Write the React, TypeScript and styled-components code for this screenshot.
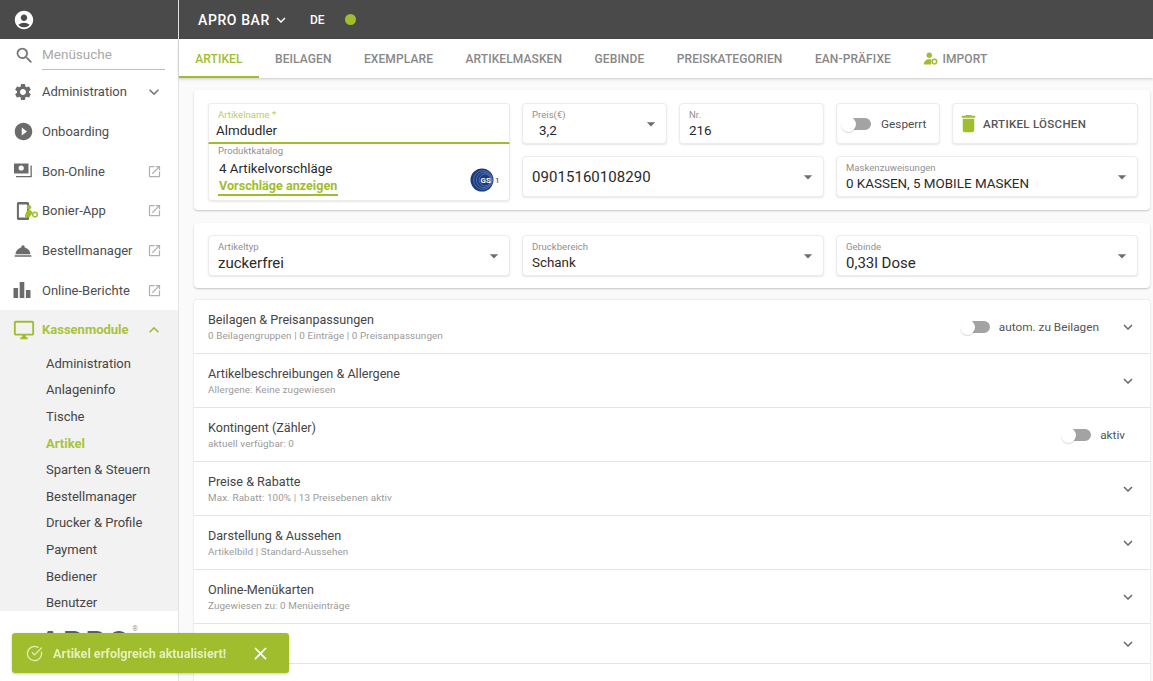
import styled, { createGlobalStyle } from "styled-components";
import {
  MdAccountCircle,
  MdArrowDropDown,
  MdClose,
  MdDelete,
  MdExpandLess,
  MdExpandMore,
  MdOpenInNew,
  MdOutlineDesktopWindows,
  MdPlayCircleFilled,
  MdRoomService,
  MdSearch,
  MdSettings,
} from "react-icons/md";
import { CircleCheckBig } from "lucide-react";
import type { ReactNode } from "react";

const GREEN = "#a0bd2e";
const DARK = "#4a4a4a";

const GlobalStyle = createGlobalStyle`
  html, body {
    margin: 0;
    height: 100%;
    overflow: hidden;
    background: #fafafa;
    font-family: Roboto, "Liberation Sans", sans-serif;
    color: #3c3c3c;
  }
  * { box-sizing: border-box; }
`;

const Shell = styled.div`
  display: grid;
  grid-template-columns: 179px 1fr;
  height: 681px;
  overflow: hidden;
`;

const Sidebar = styled.aside`
  display: flex;
  flex-direction: column;
  background: #fff;
  border-right: 1px solid #e3e3e3;
  overflow: hidden;
`;

const SideTop = styled.div`
  height: 39px;
  flex-shrink: 0;
  display: flex;
  align-items: center;
  padding-left: 13px;
  background: ${DARK};
  color: #fff;
`;

const SearchRow = styled.div`
  height: 33px;
  flex-shrink: 0;
  display: flex;
  align-items: center;
  gap: 7px;
  padding: 0 13px 0 14px;
  color: #757575;
`;

const SearchText = styled.div`
  flex: 1;
  height: 29px;
  line-height: 26px;
  font-size: 13.5px;
  color: #a9a9a9;
  border-bottom: 1px solid #bdbdbd;
`;

const NavItem = styled.div<{ $active?: boolean }>`
  height: 39.7px;
  flex-shrink: 0;
  display: flex;
  align-items: center;
  padding: 0 16px 0 13px;
  font-size: 13px;
  font-weight: ${({ $active }) => ($active ? 700 : 400)};
  color: ${({ $active }) => ($active ? "#a9c23f" : "#4d4d4d")};
  background: ${({ $active }) => ($active ? "#f2f2f2" : "transparent")};
`;

const NavIcon = styled.span<{ $active?: boolean }>`
  width: 29px;
  display: flex;
  align-items: center;
  flex-shrink: 0;
  color: ${({ $active }) => ($active ? GREEN : "#6b6b6b")};
`;

const NavLabel = styled.span`
  flex: 1;
  white-space: nowrap;
`;

const NavTrail = styled.span<{ $active?: boolean }>`
  display: flex;
  align-items: center;
  margin-right: -2px;
  color: ${({ $active }) => ($active ? GREEN : "#7a7a7a")};
`;

const ExternalTrail = styled(NavTrail)`
  color: #b0b0b0;
  margin-right: 0;
`;

const SubNav = styled.div`
  height: 261px;
  flex-shrink: 0;
  display: flex;
  flex-direction: column;
  padding: 1px 0 0 46px;
  background: #f2f2f2;
`;

const SubItem = styled.div<{ $active?: boolean }>`
  height: 26.6px;
  flex-shrink: 0;
  line-height: 26.6px;
  font-size: 13px;
  font-weight: ${({ $active }) => ($active ? 700 : 400)};
  color: ${({ $active }) => ($active ? "#a9c23f" : "#454545")};
`;

const SideLogo = styled.div`
  display: flex;
  align-items: flex-start;
  padding: 16px 0 0 40px;
  font-size: 30px;
  line-height: 30px;
  font-weight: 900;
  letter-spacing: 3px;
  color: #5e6256;
`;

const LogoMark = styled.span`
  margin-top: -2px;
  font-size: 7px;
  line-height: 8px;
  font-weight: 400;
  letter-spacing: 0;
  color: #999;
`;

const Main = styled.main`
  display: flex;
  flex-direction: column;
  min-width: 0;
`;

const TopBar = styled.header`
  height: 39px;
  flex-shrink: 0;
  display: flex;
  align-items: center;
  padding-left: 19px;
  background: ${DARK};
  color: #fff;
`;

const BarTitle = styled.span`
  font-size: 14px;
  font-weight: 500;
  letter-spacing: 0.6px;
`;

const BarChevron = styled.span`
  display: flex;
  margin-left: 2px;
`;

const LangCode = styled.span`
  margin-left: 20px;
  font-size: 12px;
  font-weight: 500;
`;

const StatusDot = styled.span`
  width: 11px;
  height: 11px;
  margin-left: 20px;
  border-radius: 50%;
  background: ${GREEN};
`;

const TabBar = styled.nav`
  height: 39px;
  flex-shrink: 0;
  display: flex;
  background: #fff;
  box-shadow: 0 1px 3px rgba(0, 0, 0, 0.2);
  position: relative;
`;

const Tab = styled.div<{ $active?: boolean }>`
  display: flex;
  align-items: center;
  gap: 4px;
  padding: 2px 16.23px 0;
  font-size: 12px;
  font-weight: 500;
  letter-spacing: 0.1px;
  color: ${({ $active }) => ($active ? GREEN : "#888")};
  border-bottom: 2px solid ${({ $active }) => ($active ? GREEN : "transparent")};
`;

const Content = styled.div`
  flex: 1;
  min-height: 0;
  overflow: hidden;
  display: flex;
  flex-direction: column;
  gap: 12px;
  padding: 12px 3px 0 15px;
`;

const Card = styled.section`
  flex-shrink: 0;
  background: #fff;
  border-radius: 4px;
  padding: 13px 12px 9px 14px;
  margin-bottom: 1px;
  box-shadow: 0 1px 2px rgba(0, 0, 0, 0.22);
`;

const SelectCard = styled(Card)`
  padding: 12px 12px 12px 14px;
  margin-bottom: 0;
`;

const FormGrid = styled.div`
  display: grid;
  grid-template-columns: 302px 302px 302px;
  grid-template-rows: 41px 45px;
  column-gap: 12px;
  row-gap: 12px;
`;

const SelectRow = styled.div`
  display: grid;
  grid-template-columns: 302px 302px 302px;
  column-gap: 12px;
`;

const NameColumn = styled.div`
  grid-row: 1 / span 2;
  display: flex;
  flex-direction: column;
`;

const Pair = styled.div<{ $cols: string }>`
  display: grid;
  grid-template-columns: ${({ $cols }) => $cols};
  gap: 12px;
`;

const Field = styled.div`
  position: relative;
  height: 41px;
  padding: 5px 9px 0;
  background: #fff;
  border: 1px solid #ececec;
  border-radius: 4px;
  box-shadow: 0 1px 2px rgba(0, 0, 0, 0.1);
`;

const NameField = styled(Field)`
  border-bottom: 2px solid ${GREEN};
  border-radius: 4px 4px 0 0;
`;

const CatalogField = styled.div`
  position: relative;
  height: 57px;
  padding: 1px 9px 0;
  background: #fff;
  border: 1px solid #ececec;
  border-top: 0;
  border-radius: 0 0 4px 4px;
  box-shadow: 0 1px 2px rgba(0, 0, 0, 0.1);
`;

const FieldLabel = styled.div<{ $green?: boolean }>`
  font-size: 9.5px;
  line-height: 11px;
  letter-spacing: 0.05px;
  color: ${({ $green }) => ($green ? "#b7cc6b" : "#8f8f8f")};
`;

const FieldValue = styled.div<{ $indent?: boolean; $large?: boolean }>`
  margin-top: 2px;
  margin-left: ${({ $indent }) => ($indent ? "7px" : "0")};
  font-size: ${({ $large }) => ($large ? "15px" : "13.4px")};
  line-height: 18px;
  color: #2a2a2a;
  white-space: nowrap;
`;

const NameValue = styled(FieldValue)`
  margin-left: -2px;
`;

const LargeValue = styled.div`
  height: 39px;
  line-height: 30px;
  font-size: 15px;
  letter-spacing: 0.05px;
  color: #2a2a2a;
`;

const Caret = styled.span`
  position: absolute;
  right: 5px;
  top: 10px;
  display: flex;
  color: #6e6e6e;
`;

const CatalogValue = styled.div`
  margin: 6px 0 0 1px;
  font-size: 13.3px;
  line-height: 13px;
  color: #2a2a2a;
`;

const CatalogLink = styled.div`
  display: inline-block;
  margin: -3px 0 0 0;
  padding: 0 1px 2px 1px;
  font-size: 12.6px;
  line-height: 13px;
  font-weight: 700;
  color: ${GREEN};
  border-bottom: 2px solid ${GREEN};
`;

const Gs1Badge = styled.span`
  position: absolute;
  right: 9px;
  bottom: 8px;
  display: flex;
`;

const ActionBox = styled.div`
  height: 41px;
  display: flex;
  align-items: center;
  background: #fff;
  border: 1px solid #ececec;
  border-radius: 4px;
  box-shadow: 0 1px 2px rgba(0, 0, 0, 0.1);
  font-size: 11.8px;
  color: #4d4d4d;
`;

const SwitchBox = styled(ActionBox)`
  gap: 10px;
  padding-left: 4px;
`;

const DeleteBox = styled(ActionBox)`
  gap: 3px;
  padding-left: 4px;
  font-size: 11.5px;
  font-weight: 500;
  letter-spacing: 0.3px;
  color: #555;
`;

const SwitchTrack = styled.span`
  position: relative;
  display: block;
  width: 30px;
  height: 16px;
  flex-shrink: 0;

  &::before {
    content: "";
    position: absolute;
    left: 12px;
    right: 0;
    top: 2px;
    height: 12px;
    border-radius: 1px 6px 6px 1px;
    background: #a3a3a3;
  }

  &::after {
    content: "";
    position: absolute;
    left: 0;
    top: 1px;
    width: 15px;
    height: 15px;
    border-radius: 50%;
    background: #fff;
    box-shadow: 0 1px 1px rgba(0, 0, 0, 0.16);
  }
`;

const Accordion = styled.section`
  flex-shrink: 0;
  background: #fff;
  border-radius: 4px 4px 0 0;
  box-shadow: 0 0 2px rgba(0, 0, 0, 0.18);
`;

const Row = styled.div<{ $short?: boolean }>`
  height: ${({ $short }) => ($short ? "40px" : "54px")};
  display: flex;
  align-items: center;
  padding: 0 13px 0 14px;
  border-bottom: 1px solid #e4e4e4;
`;

const RowText = styled.div`
  flex: 1;
  min-width: 0;
`;

const RowTitle = styled.div`
  font-size: 12.6px;
  line-height: 18px;
  color: #454545;
`;

const RowSub = styled.div`
  font-size: 9.9px;
  line-height: 13px;
  color: #9a9a9a;
  letter-spacing: 0.1px;
`;

const RowSwitch = styled.div<{ $tail: number }>`
  display: flex;
  align-items: center;
  gap: 9px;
  margin-right: ${({ $tail }) => $tail}px;
  font-size: 11.8px;
  color: #555;
`;

const RowChevron = styled.span`
  display: flex;
  width: 18px;
  color: #666;
`;

const Toast = styled.div`
  position: fixed;
  left: 12px;
  bottom: 8px;
  width: 277px;
  height: 40px;
  display: flex;
  align-items: center;
  padding: 0 18px 0 14px;
  background: ${GREEN};
  border-radius: 3px;
  color: #e6efb9;
  box-shadow: 0 1px 3px rgba(0, 0, 0, 0.2);
`;

const ToastText = styled.span`
  flex: 1;
  margin-left: 10px;
  font-size: 12.6px;
  font-weight: 700;
  white-space: nowrap;
`;

const ToastClose = styled.span`
  display: flex;
  color: #fff;
`;

function BonOnlineIcon() {
  return (
    <svg width="20" height="18" viewBox="0 0 20 18" fill="#6b6b6b">
      <path d="M1 1.5h14.5v10H1z" />
      <circle cx="8.2" cy="6" r="2.6" fill="#fff" />
      <path d="M17.5 3.5h1.3v11.8H3v-1.4h14.5z" />
    </svg>
  );
}

function BonierIcon() {
  return (
    <svg width="27" height="24" viewBox="0 0 27 24">
      <path d="M5.5 3h9a1.6 1.6 0 0 1 1.6 1.6v14.8a1.6 1.6 0 0 1-1.6 1.6h-9a1.6 1.6 0 0 1-1.6-1.6V4.6A1.6 1.6 0 0 1 5.5 3zm.4 2.6v12.8h8.2V5.6z" fill="#6b6b6b" />
      <circle cx="16" cy="8.2" r="2.2" fill={GREEN} />
      <path d="M12 18.4c0-4 1.6-7.4 4-7.4s3.2 1.8 3.4 3.6l-3.4 3.8z" fill={GREEN} />
      <circle cx="22" cy="15.6" r="2.3" fill="none" stroke={GREEN} strokeWidth="1.5" />
    </svg>
  );
}

function ChartIcon() {
  return (
    <svg width="18" height="16" viewBox="0 0 18 16" fill="#6b6b6b">
      <rect x="0.5" y="6" width="4.6" height="10" />
      <rect x="6.7" y="0" width="4.6" height="16" />
      <rect x="12.9" y="8" width="4.6" height="8" />
    </svg>
  );
}

function ImportIcon() {
  return (
    <svg width="15" height="13" viewBox="0 0 15 13">
      <circle cx="6.2" cy="3.2" r="2.7" fill={GREEN} />
      <path d="M.8 12.4c0-3.2 2.4-5.2 5.4-5.2 1 0 1.6.2 2 .4v4.8z" fill={GREEN} />
      <circle cx="11.4" cy="9.6" r="2.3" fill="none" stroke={GREEN} strokeWidth="1.5" />
    </svg>
  );
}

function Gs1Logo() {
  return (
    <svg width="30" height="24" viewBox="0 0 30 24">
      <circle cx="12" cy="12" r="11.5" fill="#1a3a7c" />
      <circle cx="13" cy="12" r="9.4" fill="none" stroke="#8fa6d8" strokeWidth="0.5" />
      <circle cx="14" cy="12" r="7.6" fill="none" stroke="#8fa6d8" strokeWidth="0.5" />
      <circle cx="15" cy="12" r="5.9" fill="#1a3a7c" stroke="#8fa6d8" strokeWidth="0.5" />
      <text x="10.5" y="14.8" fontFamily="Roboto" fontSize="8" fontWeight="700" fill="#fff">
        GS
      </text>
      <text x="25" y="15" fontFamily="Roboto" fontSize="8" fill="#333">
        1
      </text>
    </svg>
  );
}

const subItems = [
  "Administration",
  "Anlageninfo",
  "Tische",
  "Artikel",
  "Sparten & Steuern",
  "Bestellmanager",
  "Drucker & Profile",
  "Payment",
  "Bediener",
  "Benutzer",
];

const tabs = [
  "ARTIKEL",
  "BEILAGEN",
  "EXEMPLARE",
  "ARTIKELMASKEN",
  "GEBINDE",
  "PREISKATEGORIEN",
  "EAN-PRÄFIXE",
];

const rows: { title: string; sub?: string; toggle?: string; tail?: number; noChevron?: boolean }[] = [
  {
    title: "Beilagen & Preisanpassungen",
    sub: "0 Beilagengruppen | 0 Einträge | 0 Preisanpassungen",
    toggle: "autom. zu Beilagen",
    tail: 20,
  },
  { title: "Artikelbeschreibungen & Allergene", sub: "Allergene: Keine zugewiesen" },
  { title: "Kontingent (Zähler)", sub: "aktuell verfügbar: 0", toggle: "aktiv", tail: 12, noChevron: true },
  { title: "Preise & Rabatte", sub: "Max. Rabatt: 100% | 13 Preisebenen aktiv" },
  { title: "Darstellung & Aussehen", sub: "Artikelbild | Standard-Aussehen" },
  { title: "Online-Menükarten", sub: "Zugewiesen zu: 0 Menüeinträge" },
  { title: "" },
  { title: "Weitere Einstellungen", sub: " " },
];

function ExternalLink() {
  return (
    <ExternalTrail>
      <MdOpenInNew size={15} />
    </ExternalTrail>
  );
}

function SelectField({ label, value, large }: { label: string; value: string; large?: boolean }) {
  return (
    <Field>
      <FieldLabel>{label}</FieldLabel>
      <FieldValue $large={large}>{value}</FieldValue>
      <Caret>
        <MdArrowDropDown size={20} />
      </Caret>
    </Field>
  );
}

function Nav({ icon, label, trail }: { icon: ReactNode; label: string; trail?: ReactNode }) {
  return (
    <NavItem>
      <NavIcon>{icon}</NavIcon>
      <NavLabel>{label}</NavLabel>
      {trail}
    </NavItem>
  );
}

export default function App() {
  return (
    <Shell>
      <GlobalStyle />
      <Sidebar>
        <SideTop>
          <MdAccountCircle size={22} />
        </SideTop>
        <SearchRow>
          <MdSearch size={21} />
          <SearchText>Menüsuche</SearchText>
        </SearchRow>
        <Nav
          icon={<MdSettings size={20} />}
          label="Administration"
          trail={
            <NavTrail>
              <MdExpandMore size={20} />
            </NavTrail>
          }
        />
        <Nav icon={<MdPlayCircleFilled size={21} />} label="Onboarding" />
        <Nav icon={<BonOnlineIcon />} label="Bon-Online" trail={<ExternalLink />} />
        <Nav icon={<BonierIcon />} label="Bonier-App" trail={<ExternalLink />} />
        <Nav icon={<MdRoomService size={20} />} label="Bestellmanager" trail={<ExternalLink />} />
        <Nav icon={<ChartIcon />} label="Online-Berichte" trail={<ExternalLink />} />
        <NavItem $active>
          <NavIcon $active>
            <MdOutlineDesktopWindows size={22} />
          </NavIcon>
          <NavLabel>Kassenmodule</NavLabel>
          <NavTrail $active>
            <MdExpandLess size={20} />
          </NavTrail>
        </NavItem>
        <SubNav>
          {subItems.map((item) => (
            <SubItem key={item} $active={item === "Artikel"}>
              {item}
            </SubItem>
          ))}
        </SubNav>
        <SideLogo>
          APRO<LogoMark>®</LogoMark>
        </SideLogo>
      </Sidebar>

      <Main>
        <TopBar>
          <BarTitle>APRO BAR</BarTitle>
          <BarChevron>
            <MdExpandMore size={18} />
          </BarChevron>
          <LangCode>DE</LangCode>
          <StatusDot />
        </TopBar>

        <TabBar>
          {tabs.map((tab) => (
            <Tab key={tab} $active={tab === "ARTIKEL"}>
              {tab}
            </Tab>
          ))}
          <Tab>
            <ImportIcon />
            IMPORT
          </Tab>
        </TabBar>

        <Content>
          <Card>
            <FormGrid>
              <NameColumn>
                <NameField>
                  <FieldLabel $green>Artikelname *</FieldLabel>
                  <NameValue>Almdudler</NameValue>
                </NameField>
                <CatalogField>
                  <FieldLabel>Produktkatalog</FieldLabel>
                  <CatalogValue>4 Artikelvorschläge</CatalogValue>
                  <CatalogLink>Vorschläge anzeigen</CatalogLink>
                  <Gs1Badge>
                    <Gs1Logo />
                  </Gs1Badge>
                </CatalogField>
              </NameColumn>
              <Pair $cols="145px 145px">
                <Field>
                  <FieldLabel>Preis(€)</FieldLabel>
                  <FieldValue $indent>3,2</FieldValue>
                  <Caret>
                    <MdArrowDropDown size={20} />
                  </Caret>
                </Field>
                <Field>
                  <FieldLabel>Nr.</FieldLabel>
                  <FieldValue>216</FieldValue>
                </Field>
              </Pair>
              <Pair $cols="104px 186px">
                <SwitchBox>
                  <SwitchTrack />
                  Gesperrt
                </SwitchBox>
                <DeleteBox>
                  <MdDelete size={23} color={GREEN} />
                  ARTIKEL LÖSCHEN
                </DeleteBox>
              </Pair>
              <Field>
                <LargeValue>09015160108290</LargeValue>
                <Caret>
                  <MdArrowDropDown size={20} />
                </Caret>
              </Field>
              <SelectField label="Maskenzuweisungen" value="0 KASSEN, 5 MOBILE MASKEN" />
            </FormGrid>
          </Card>

          <SelectCard>
            <SelectRow>
              <SelectField label="Artikeltyp" value="zuckerfrei" large />
              <SelectField label="Druckbereich" value="Schank" />
              <SelectField label="Gebinde" value="0,33l Dose" large />
            </SelectRow>
          </SelectCard>

          <Accordion>
            {rows.map((row, i) => (
              <Row key={i} $short={!row.title}>
                <RowText>
                  <RowTitle>{row.title}</RowTitle>
                  {row.sub && <RowSub>{row.sub}</RowSub>}
                </RowText>
                {row.toggle && (
                  <RowSwitch $tail={row.tail ?? 0}>
                    <SwitchTrack />
                    {row.toggle}
                  </RowSwitch>
                )}
                {!row.noChevron && (
                  <RowChevron>
                    <MdExpandMore size={20} />
                  </RowChevron>
                )}
              </Row>
            ))}
          </Accordion>
        </Content>
      </Main>

      <Toast>
        <CircleCheckBig size={17} strokeWidth={1.8} />
        <ToastText>Artikel erfolgreich aktualisiert!</ToastText>
        <ToastClose>
          <MdClose size={21} />
        </ToastClose>
      </Toast>
    </Shell>
  );
}
